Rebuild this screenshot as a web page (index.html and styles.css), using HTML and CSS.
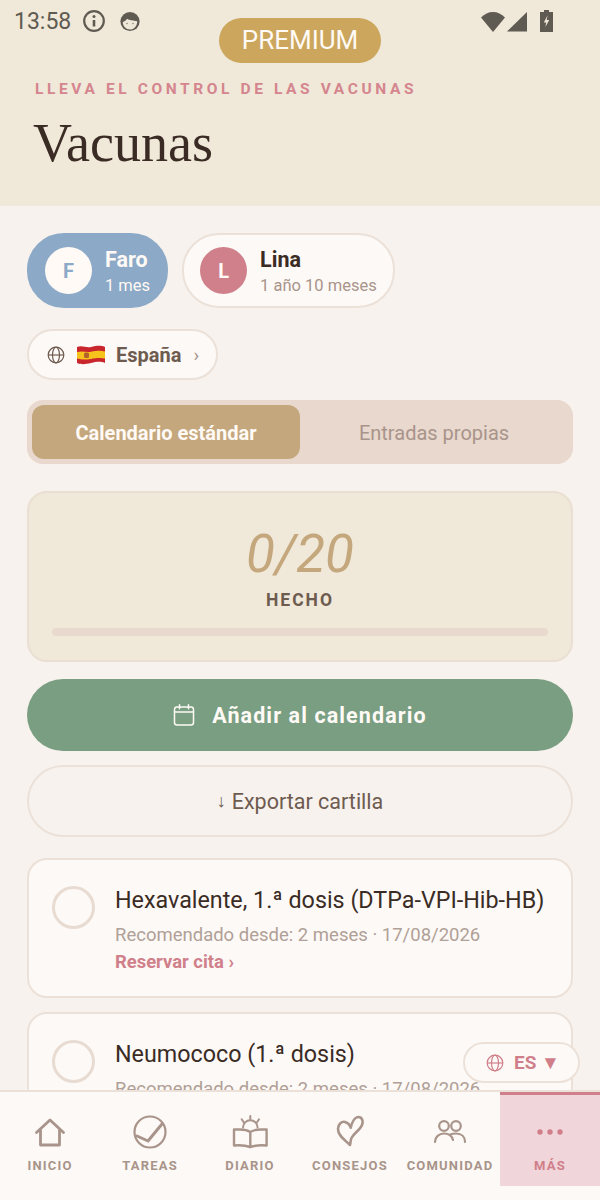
FILE: index.html
```html
<!DOCTYPE html>
<html lang="es">
<head>
    <meta charset="UTF-8">
    <meta name="viewport" content="width=device-width, initial-scale=1.0">
    <title>Vacunas</title>
    <link rel="stylesheet" href="styles.css">
</head>
<body>
    <header class="header">
        <div class="status">
            <div class="status-left">
                <span class="time">13:58</span>
                <svg class="status-icon" width="24" height="24" viewBox="0 0 24 24" fill="none" stroke="#5f5a52" stroke-width="2.2">
                    <circle cx="12" cy="12" r="9.8"/>
                    <path d="M12 11v6.5" stroke-width="2.6"/>
                    <circle cx="12" cy="7.4" r="1.5" fill="#5f5a52" stroke="none"/>
                </svg>
                <svg class="status-icon face" width="20" height="22" viewBox="0 0 20 22">
                    <circle cx="10" cy="11.5" r="9.6" fill="#5f5a52"/>
                    <path d="M2.8 12c1.8-.4 3.5-1.600 4.200-3.200 2 1.400 6.500 1.800 10.200 2.400 0 5-3.200 8.300-7.200 8.300s-7.200-3.200-7.200-7.500z" fill="#efe7d8"/>
                    <circle cx="7" cy="13.500" r=".8" fill="#8f897e"/>
                    <circle cx="13" cy="13.500" r=".8" fill="#8f897e"/>
                </svg>
            </div>
            <div class="status-right">
                <svg width="24" height="21" viewBox="0 0 24 21"><path d="M0 6.500C3.500 3 7.500 1 12 1s8.500 2 12 5.500L12 21z" fill="#5f5a52"/></svg>
                <svg width="20" height="21" viewBox="0 0 20 21"><path d="M20 1v19.500H0z" fill="#5f5a52"/></svg>
                <svg class="battery" width="13" height="22" viewBox="0 0 13 22">
                    <path d="M4 0h5v2h4v20H0V2h4z" fill="#5f5a52"/>
                    <path d="M7.500 5.500 3.800 12.500h2.400l-.8 4.500 3.800-7H6.700z" fill="#efe7d8"/>
                </svg>
            </div>
        </div>
        <div class="premium">PREMIUM</div>
        <p class="eyebrow">LLEVA EL CONTROL DE LAS VACUNAS</p>
        <h1 class="title">Vacunas</h1>
    </header>

    <main class="content">
        <div class="kids">
            <div class="kid kid-active">
                <span class="avatar avatar-white">F</span>
                <div>
                    <div class="kid-name">Faro</div>
                    <div class="kid-age">1 mes</div>
                </div>
            </div>
            <div class="kid">
                <span class="avatar avatar-rose">L</span>
                <div>
                    <div class="kid-name">Lina</div>
                    <div class="kid-age">1 año 10 meses</div>
                </div>
            </div>
        </div>

        <div class="country">
            <svg width="18" height="18" viewBox="0 0 18 18" fill="none" stroke="#6e5b50" stroke-width="1.200">
                <circle cx="9" cy="9" r="7.800"/>
                <ellipse cx="9" cy="9" rx="3.500" ry="7.800"/>
                <path d="M1.200 9h15.600"/>
            </svg>
            <svg class="flag" width="28" height="20" viewBox="0 0 28 20">
                <path d="M0 2c5-2 9 1 14 0s9-2 14 0v16c-5-2-9-1-14 0s-9 2-14 0z" fill="#c8252c"/>
                <path d="M0 7c5-1.500 9 .5 14-.3s9-1.500 14-.3v7.200c-5-1.200-9-.5-14 .3s-9 1.200-14-.3z" fill="#f6c21c"/>
                <rect x="7" y="7.500" width="5" height="5.500" rx="1.500" fill="#b5622a"/>
            </svg>
            <span class="country-name">España</span>
            <span class="country-arrow">›</span>
        </div>

        <div class="tabs">
            <div class="tab tab-active">Calendario estándar</div>
            <div class="tab">Entradas propias</div>
        </div>

        <section class="progress">
            <div class="progress-count">0/20</div>
            <div class="progress-label">HECHO</div>
            <div class="progress-bar"></div>
        </section>

        <button class="btn btn-primary">
            <svg width="22" height="22" viewBox="0 0 22 22" fill="none" stroke="#fffaf5" stroke-width="1.500" stroke-linecap="round">
                <rect x="1.500" y="3" width="19" height="18" rx="2.500"/>
                <path d="M1.500 8h19M6.500 .8v4M15.500 .8v4"/>
            </svg>
            Añadir al calendario
        </button>
        <button class="btn btn-outline"><span class="btn-arrow">↓</span> Exportar cartilla</button>

        <article class="vaccine">
            <span class="check"></span>
            <div>
                <h2 class="vaccine-name">Hexavalente, 1.ª dosis (DTPa-VPI-Hib-HB)</h2>
                <p class="vaccine-meta">Recomendado desde: 2 meses · 17/08/2026</p>
                <a class="vaccine-link">Reservar cita ›</a>
            </div>
        </article>
        <article class="vaccine">
            <span class="check"></span>
            <div>
                <h2 class="vaccine-name">Neumococo (1.ª dosis)</h2>
                <p class="vaccine-meta">Recomendado desde: 2 meses · 17/08/2026</p>
            </div>
        </article>
    </main>

    <div class="lang">
        <svg width="18" height="18" viewBox="0 0 18 18" fill="none" stroke="#d07f8a" stroke-width="1.200">
            <circle cx="9" cy="9" r="7.800"/>
            <ellipse cx="9" cy="9" rx="3.500" ry="7.800"/>
            <path d="M1.200 9h15.600"/>
        </svg>
        <span>ES ▼</span>
    </div>

    <nav class="nav">
        <div class="nav-item">
            <svg width="32" height="34" viewBox="0 0 32 34" fill="none" stroke="#a8948a" stroke-width="2.800" stroke-linejoin="round" stroke-linecap="round">
                <path d="M2.500 17.500 16 5l13.500 12.500M6.500 15v15h19V15"/>
            </svg>
            <span>INICIO</span>
        </div>
        <div class="nav-item">
            <svg width="34" height="34" viewBox="0 0 34 34" fill="none" stroke="#a8948a" stroke-width="2.200" stroke-linecap="round" stroke-linejoin="round">
                <circle cx="17" cy="17" r="15.500"/>
                <path d="M4 21l11 5L29 9" stroke-width="3"/>
            </svg>
            <span>TAREAS</span>
        </div>
        <div class="nav-item">
            <svg width="36" height="34" viewBox="0 0 36 34" fill="none" stroke="#a8948a" stroke-width="2.400" stroke-linecap="round" stroke-linejoin="round">
                <path d="M2 14.500h6c4 0 8 1 10.300 2.500 2.300-1.500 6.300-2.500 10.300-2.500h6v16c-6-.5-12 0-16.300 1.500-4.300-1.500-10.300-2-16.300-1.500zM18.300 17v15"/>
                <path d="M11 12.500a7.300 7.300 0 0 1 14.600 0M18.300 1v3.300M9.700 4.300l2 3M27 4.300l-2 3" stroke-width="2"/>
            </svg>
            <span>DIARIO</span>
        </div>
        <div class="nav-item">
            <svg width="28" height="34" viewBox="0 0 28 34" fill="none" stroke="#a8948a" stroke-width="2.600" stroke-linecap="round" stroke-linejoin="round">
                <path d="M14 30C9 25 2 21 2 14c0-5 4-8 7-7 3 1 5 3 5.700 5.700C16 7 19 2 22.500 2 26 2 27.500 6 26 10c-2 5-8 8-10.500 13-1 2-1 5-1.500 7z"/>
            </svg>
            <span>CONSEJOS</span>
        </div>
        <div class="nav-item">
            <svg width="34" height="34" viewBox="0 0 34 34" fill="none" stroke="#a8948a" stroke-width="2.200" stroke-linecap="round">
                <circle cx="11" cy="11" r="4.800"/>
                <circle cx="23" cy="11" r="4.800"/>
                <path d="M2 27c0-5 4-8.500 9-8.500 4.500 0 8 2.500 9 6.500M17.500 19.500c1.800-.8 3.500-1 5.500-1 5.500 0 9 3.500 9 8.500"/>
            </svg>
            <span>COMUNIDAD</span>
        </div>
        <div class="nav-item nav-item-active">
            <svg width="26" height="34" viewBox="0 0 26 34" fill="#d07f8a">
                <circle cx="3" cy="17" r="2.700"/>
                <circle cx="13" cy="17" r="2.700"/>
                <circle cx="23" cy="17" r="2.700"/>
            </svg>
            <span>MÁS</span>
        </div>
    </nav>
</body>
</html>
```

FILE: styles.css
```css
* {
    box-sizing: border-box;
}

body {
    margin: 0;
    height: 1200px;
    overflow: hidden;
    display: flex;
    flex-direction: column;
    position: relative;
    background-color: #f7f2ed;
    color: #3a2c25;
    font-family: Roboto, "Liberation Sans", sans-serif;
}

/* Header */
.header {
    height: 206px;
    flex-shrink: 0;
    background-color: #f0e8d8;
    padding: 8px 33px 0;
    position: relative;
}

.status {
    display: flex;
    justify-content: space-between;
    align-items: center;
    height: 26px;
    margin: 0 -20px 0 -19px;
    color: #5f5a52;
}

.status-left {
    display: flex;
    align-items: center;
    gap: 11px;
}

.status-right {
    display: flex;
    align-items: center;
    gap: 2px;
    margin-right: 34px;
}

.time {
    font-size: 23px;
}

.face {
    margin-left: 3px;
}

.battery {
    margin-left: 11px;
}

.premium {
    position: absolute;
    top: 18px;
    left: 219px;
    width: 162px;
    height: 45px;
    border-radius: 23px;
    background-color: #cba65c;
    color: #fffaf5;
    font-size: 26px;
    line-height: 45px;
    text-align: center;
}

.eyebrow {
    margin: 46px 0 0 2px;
    font-size: 15.500px;
    font-weight: 700;
    line-height: 18px;
    letter-spacing: 3.600px;
    color: #d4858e;
}

.title {
    margin: 16px 0 0;
    font-family: "Liberation Serif", serif;
    font-size: 54px;
    font-weight: 400;
    line-height: 58px;
    color: #3a2c25;
}

/* Main column */
.content {
    flex: 1;
    min-height: 0;
    overflow: hidden;
    padding: 27px 27px 0;
}

.kids {
    display: flex;
    gap: 14px;
}

.kid {
    display: flex;
    align-items: center;
    gap: 13px;
    height: 75px;
    padding: 0 16px;
    background-color: #fdf9f6;
    border: 2px solid #ebe1d9;
    border-radius: 37px;
}

.kid-active {
    background-color: #8ca9c7;
    border-color: #8ca9c7;
    color: #fffaf5;
}

.avatar {
    width: 47px;
    height: 47px;
    border-radius: 50%;
    display: flex;
    align-items: center;
    justify-content: center;
    font-size: 20px;
    font-weight: 700;
}

.avatar-white {
    background-color: #fffaf5;
    color: #8ca9c7;
}

.avatar-rose {
    background-color: #d0808a;
    color: #fffaf5;
}

.kid-name {
    margin-top: 5px;
    font-size: 21.500px;
    font-weight: 700;
    line-height: 26px;
}

.kid-age {
    font-size: 16.500px;
    line-height: 26px;
    color: #a8948a;
}

.kid-active .kid-age {
    color: #fffaf5;
}

.country {
    display: inline-flex;
    align-items: center;
    width: 191px;
    height: 51px;
    margin-top: 21px;
    padding-left: 18px;
    background-color: #fdf9f6;
    border: 2px solid #ebe1d9;
    border-radius: 26px;
}

.flag {
    margin-left: 12px;
}

.country-name {
    margin-left: 11px;
    font-size: 20px;
    font-weight: 700;
    color: #6e5b50;
}

.country-arrow {
    margin-left: 12px;
    font-size: 19px;
    color: #a8948a;
}

/* Segmented control */
.tabs {
    display: flex;
    height: 64px;
    margin-top: 20px;
    padding: 5px;
    background-color: #e8d8ce;
    border-radius: 16px;
}

.tab {
    flex: 1;
    display: flex;
    align-items: center;
    justify-content: center;
    padding-top: 1px;
    font-size: 20px;
    color: #a8948a;
}

.tab-active {
    flex: 0 0 268px;
    background-color: #c4a77d;
    border-radius: 12px;
    color: #fffaf5;
    font-weight: 700;
}

/* Progress card */
.progress {
    height: 171px;
    margin-top: 27px;
    padding: 32px 23px 0;
    background-color: #f0e8d8;
    border: 2px solid #e9dfd3;
    border-radius: 20px;
    text-align: center;
}

.progress-count {
    font-size: 53px;
    font-style: italic;
    font-weight: 400;
    line-height: 58px;
    color: #c4a77d;
}

.progress-label {
    margin-top: 6px;
    font-size: 17.500px;
    font-weight: 700;
    line-height: 22px;
    letter-spacing: 2px;
    color: #6e5b50;
}

.progress-bar {
    height: 8px;
    margin-top: 17px;
    background-color: #e8d8ce;
    border-radius: 4px;
}

/* Buttons */
.btn {
    display: flex;
    align-items: center;
    justify-content: center;
    width: 100%;
    height: 72px;
    border-radius: 36px;
    font-family: inherit;
    font-size: 21.500px;
}

.btn-primary {
    gap: 17px;
    margin-top: 17px;
    background-color: #7a9e82;
    border: none;
    color: #fffaf5;
    font-weight: 700;
    letter-spacing: 1.100px;
}

.btn-outline {
    gap: 6px;
    margin-top: 14px;
    background: none;
    border: 2px solid #ebe1d9;
    color: #6e5b50;
}

.btn-arrow {
    font-size: 18px;
}

/* Vaccine cards */
.vaccine {
    display: flex;
    gap: 20px;
    height: 140px;
    margin-top: 21px;
    padding: 26px 23px 0;
    background-color: #fdf9f6;
    border: 2px solid #ebe1d9;
    border-radius: 20px;
}

.vaccine + .vaccine {
    margin-top: 14px;
}

.check {
    flex-shrink: 0;
    width: 43px;
    height: 43px;
    border: 3px solid #e8dbd2;
    border-radius: 50%;
}

.vaccine-name {
    margin: 0;
    font-size: 23.300px;
    font-weight: 400;
    line-height: 29px;
    color: #3a2c25;
}

.vaccine-meta {
    margin: 8px 0 0;
    font-size: 18.500px;
    line-height: 24px;
    color: #b0a097;
}

.vaccine-link {
    display: block;
    margin-top: 4px;
    font-size: 18.400px;
    font-weight: 700;
    line-height: 22px;
    color: #d0808a;
}

/* Language pill */
.lang {
    position: absolute;
    top: 1042px;
    left: 463px;
    display: flex;
    align-items: center;
    gap: 10px;
    width: 117px;
    height: 41px;
    padding-left: 21px;
    background-color: #fdf9f6;
    border: 2px solid #ebe1d9;
    border-radius: 21px;
    color: #d07f8a;
    font-size: 19px;
    font-weight: 700;
}

/* Bottom nav */
.nav {
    display: flex;
    height: 110px;
    flex-shrink: 0;
    background-color: #fdf9f6;
    border-top: 2px solid #ebe1d9;
}

.nav-item {
    flex: 1;
    height: 94px;
    display: flex;
    flex-direction: column;
    align-items: center;
    justify-content: flex-start;
    padding-top: 23px;
    gap: 9px;
    color: #a8948a;
    font-size: 13px;
    font-weight: 700;
    letter-spacing: 1.200px;
}

.nav-item-active {
    padding-top: 20px;
    background-color: #f0d5da;
    border-top: 3px solid #d0808a;
    color: #d07f8a;
}
```
